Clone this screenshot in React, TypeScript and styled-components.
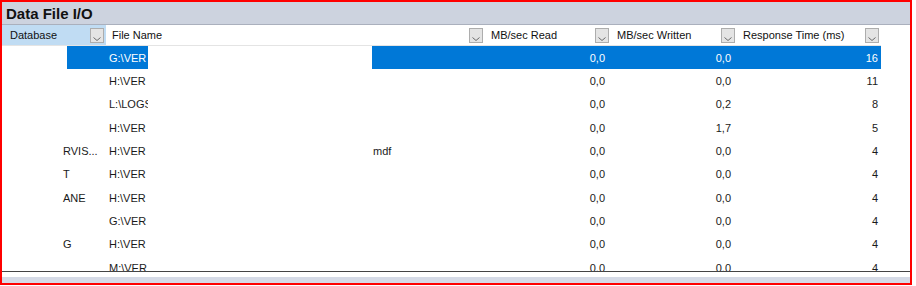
import styled, { createGlobalStyle } from 'styled-components';

const GlobalStyle = createGlobalStyle`
  html, body {
    margin: 0;
    padding: 0;
    background: #ffffff;
  }
  body {
    font-family: "Liberation Sans", Arial, sans-serif;
    font-size: 11px;
    color: #1a1a1a;
  }
`;

const Frame = styled.div`
  width: 912px;
  height: 285px;
  box-sizing: border-box;
  border: 2px solid #ff0000;
  display: flex;
  flex-direction: column;
  overflow: hidden;
`;

const TitleBar = styled.div`
  height: 23px;
  flex: none;
  box-sizing: border-box;
  background: #cdd3df;
  border-bottom: 1px solid #aab0bd;
  display: flex;
  align-items: center;
  padding-left: 4px;
  font-size: 15px;
  font-weight: bold;
  color: #111111;
`;

const COLS = '104px 379px 126px 126px 144px';

const HeaderRow = styled.div`
  display: grid;
  grid-template-columns: ${COLS};
  width: 879px;
  height: 21px;
  flex: none;
  box-sizing: border-box;
  border-bottom: 1px solid #e4e4e4;
`;

const HeaderCell = styled.div<{ $active?: boolean }>`
  display: flex;
  align-items: center;
  justify-content: space-between;
  padding: 0 2px 0 ${(p) => (p.$active ? '8px' : '6px')};
  background: ${(p) => (p.$active ? '#c0dcf3' : '#ffffff')};
  color: #111111;
  white-space: nowrap;
`;

const FilterButton = styled.svg`
  width: 14px;
  height: 15px;
  flex: none;
`;

const Body = styled.div`
  height: 225px;
  flex: none;
  overflow: hidden;
  border-bottom: 1px solid #444444;
`;

const Row = styled.div<{ $selected?: boolean }>`
  display: grid;
  grid-template-columns: ${COLS};
  width: 879px;
  height: 23.33px;
  align-items: stretch;
  background: ${(p) => (p.$selected ? '#0078d7' : '#ffffff')};
  color: ${(p) => (p.$selected ? '#ffffff' : '#1a1a1a')};
`;

const DbCell = styled.div`
  display: flex;
  align-items: center;
  white-space: nowrap;
  overflow: hidden;
`;

const Redact = styled.span<{ $w: number }>`
  display: block;
  width: ${(p) => p.$w}px;
  align-self: stretch;
  background: #ffffff;
  flex: none;
`;

const DbName = styled.span`
  padding-left: 61px;
`;

const FileCell = styled.div`
  display: flex;
  align-items: center;
  padding-left: 3px;
  white-space: nowrap;
  overflow: hidden;
`;

const FilePath = styled.span`
  width: 39px;
  overflow: hidden;
  flex: none;
`;

const FileExt = styled.span`
  padding-left: 1px;
`;

const NumCell = styled.div<{ $pad?: number }>`
  display: flex;
  align-items: center;
  justify-content: flex-end;
  padding-right: ${(p) => p.$pad ?? 6}px;
`;

const Footer = styled.div`
  flex: 1;
  border-top: 5px solid #ffffff;
  background: #d5dae6;
`;

type Entry = {
  db: string;
  file: string;
  ext?: string;
  read: string;
  written: string;
  resp: string;
  selected?: boolean;
};

const rows: Entry[] = [
  { db: '', file: 'G:\\VER', read: '0,0', written: '0,0', resp: '16', selected: true },
  { db: '', file: 'H:\\VER', read: '0,0', written: '0,0', resp: '11' },
  { db: '', file: 'L:\\LOGS', read: '0,0', written: '0,2', resp: '8' },
  { db: '', file: 'H:\\VER', read: '0,0', written: '1,7', resp: '5' },
  { db: 'RVIS...', file: 'H:\\VER', ext: 'mdf', read: '0,0', written: '0,0', resp: '4' },
  { db: 'T', file: 'H:\\VER', read: '0,0', written: '0,0', resp: '4' },
  { db: 'ANE', file: 'H:\\VER', read: '0,0', written: '0,0', resp: '4' },
  { db: '', file: 'G:\\VER', read: '0,0', written: '0,0', resp: '4' },
  { db: 'G', file: 'H:\\VER', read: '0,0', written: '0,0', resp: '4' },
  { db: '', file: 'M:\\VER', read: '0,0', written: '0,0', resp: '4' },
];

const Filter = () => (
  <FilterButton viewBox="0 0 14 15">
    <rect x="0.5" y="0.5" width="13" height="14" fill="#e4e4e4" stroke="#adadad" />
    <polyline points="3.5,9.5 7,12.5 10.5,9.5" fill="none" stroke="#6a6a6a" strokeWidth="1" />
  </FilterButton>
);

const headers = ['Database', 'File Name', 'MB/sec Read', 'MB/sec Written', 'Response Time (ms)'];

function App() {
  return (
    <>
      <GlobalStyle />
      <Frame>
        <TitleBar>Data File I/O</TitleBar>
        <HeaderRow>
          {headers.map((h, i) => (
            <HeaderCell key={h} $active={i === 0}>
              <span>{h}</span>
              <Filter />
            </HeaderCell>
          ))}
        </HeaderRow>
        <Body>
          {rows.map((r, i) => (
            <Row key={i} $selected={r.selected}>
              <DbCell>
                {r.selected ? <Redact $w={65} /> : <DbName>{r.db}</DbName>}
              </DbCell>
              <FileCell>
                <FilePath>{r.file}</FilePath>
                <Redact $w={224} />
                {r.ext && <FileExt>{r.ext}</FileExt>}
              </FileCell>
              <NumCell>{r.read}</NumCell>
              <NumCell>{r.written}</NumCell>
              <NumCell $pad={3}>{r.resp}</NumCell>
            </Row>
          ))}
        </Body>
        <Footer />
      </Frame>
    </>
  );
}

export default App;
